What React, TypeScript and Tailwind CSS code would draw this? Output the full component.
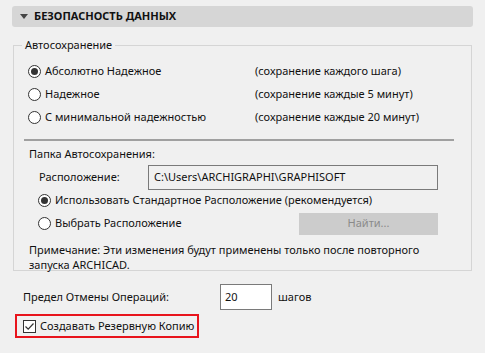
import React from "react";

const font = { fontFamily: "'Noto Sans', 'Open Sans', sans-serif" };

function Radio(props: { checked?: boolean }) {
  return (
    <span className="w-[13px] h-[13px] rounded-full border border-[#333] bg-white flex items-center justify-center shrink-0">
      {props.checked && <span className="w-[7px] h-[7px] rounded-full bg-[#333]" />}
    </span>
  );
}

const modes = [
  { label: "Абсолютно Надежное", hint: "(сохранение каждого шага)", checked: true },
  { label: "Надежное", hint: "(сохранение каждые 5 минут)", checked: false },
  { label: "С минимальной надежностью", hint: "(сохранение каждые 20 минут)", checked: false },
];

export default function App() {
  return (
    <div className="w-[485px] h-[353px] bg-[#f0f0f0] text-[11px] text-[#111] pt-[6px] whitespace-nowrap" style={font}>
      <div className="mx-[12px] h-[21px] rounded-[3px] bg-[#d6d6d6] flex items-center pl-[8px] gap-[6px]">
        <span className="w-0 h-0 border-l-[4px] border-r-[4px] border-t-[5px] border-l-transparent border-r-transparent border-t-[#444]" />
        <span className="font-bold text-[11px] text-[#111]">БЕЗОПАСНОСТЬ ДАННЫХ</span>
      </div>

      <fieldset className="mx-[13px] mt-[10px] h-[234px] border border-[#d5d5d5] pl-[14px] pr-[17px] pt-[7px]">
        <legend className="ml-[-6px] px-[3px] leading-[16px]">Автосохранение</legend>
        <div className="flex flex-col">
          {modes.map((m) => (
            <div key={m.label} className="flex items-center h-[23px]">
              <div className="w-[227px] flex items-center gap-[4px]">
                <Radio checked={m.checked} />
                <span>{m.label}</span>
              </div>
              <span>{m.hint}</span>
            </div>
          ))}
        </div>
        <div className="mt-[10px] ml-[-4px] h-[2px] bg-[#a0a0a0]" />

        <div className="mt-[5px] ml-[1px]">Папка Автосохранения:</div>
        <div className="flex items-center mt-[2px] ml-[11px]">
          <span className="w-[109px]">Расположение:</span>
          <div className="w-[290px] h-[25px] border border-[#7a7a7a] bg-[#f0f0f0] flex items-center px-[5px]">
            C:\Users\ARCHIGRAPHI\GRAPHISOFT
          </div>
        </div>
        <div className="flex items-center gap-[4px] ml-[10px] h-[22px]">
          <Radio checked />
          <span>Использовать Стандартное Расположение (рекомендуется)</span>
        </div>
        <div className="flex items-center ml-[10px] h-[24px]">
          <div className="flex items-center gap-[4px] w-[261px]">
            <Radio />
            <span>Выбрать Расположение</span>
          </div>
          <div className="w-[139px] h-[22px] bg-[#cccccc] text-[#8a8a8a] flex items-center justify-center">
            Найти...
          </div>
        </div>
        <div className="mt-[6px] ml-[1px] leading-[15px]">
          Примечание: Эти изменения будут применены только после повторного
          <br />
          запуска ARCHICAD.
        </div>
      </fieldset>

      <div className="flex items-center ml-[23px] mt-[13px]">
        <span className="w-[197px]">Предел Отмены Операций:</span>
        <div className="w-[52px] h-[26px] border border-[#7a7a7a] bg-white flex items-center px-[4px]">20</div>
        <span className="ml-[6px]">шагов</span>
      </div>

      <div className="ml-[15px] mt-[4px] w-[184px] h-[24px] border-2 border-[#e8141c] flex items-center pl-[6px] gap-[4px]">
        <span className="w-[13px] h-[13px] border border-[#333] bg-white flex items-center justify-center">
          <svg width="11" height="11" viewBox="0 0 11 11">
            <path d="M1.5 5.5 L4.2 8.2 L9.5 2.5" fill="none" stroke="#333" strokeWidth="1.2" />
          </svg>
        </span>
        <span>Создавать Резервную Копию</span>
      </div>
    </div>
  );
}
